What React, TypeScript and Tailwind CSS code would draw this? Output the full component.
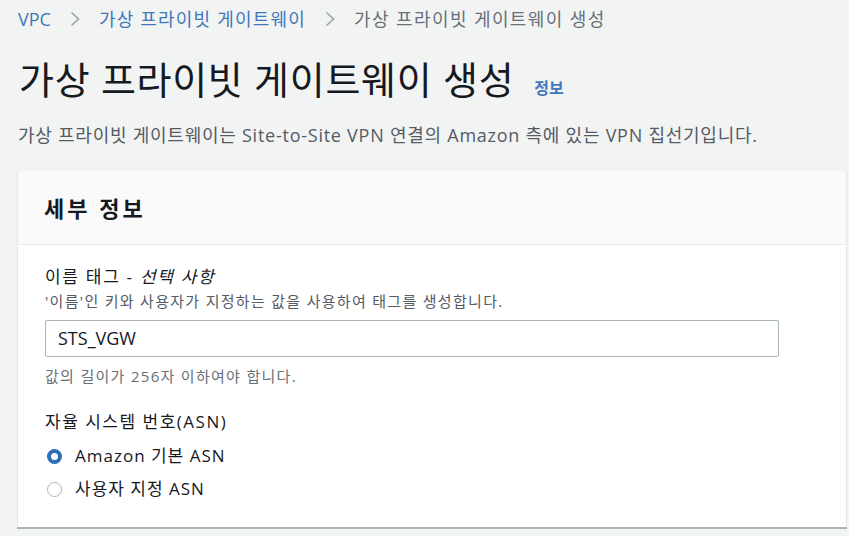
const FONT = "font-['Open_Sans','Noto_Sans_CJK_KR',sans-serif]"

function Chevron() {
  return (
    <svg width="12" height="16" viewBox="0 0 12 16" className="mx-[18px] shrink-0" aria-hidden>
      <path d="M2.5 1.5 L9.5 8 L2.5 14.5" fill="none" stroke="#9aa3a5" strokeWidth="1.6" />
    </svg>
  )
}

function Radio({ checked, label }: { checked: boolean; label: string }) {
  return (
    <label className="flex h-[24px] items-center">
      <span
        className={`ml-[2px] box-border h-[15px] w-[15px] shrink-0 rounded-full ${
          checked ? 'border-[4px] border-[#2f6db5] bg-white' : 'border border-[#aab7b8] bg-white'
        }`}
      />
      <span className="ml-[13px] text-[17px] leading-[24px] tracking-[1px] text-[#16191f]">{label}</span>
    </label>
  )
}

export default function App() {
  return (
    <div className={`${FONT} h-[536px] w-full overflow-hidden bg-[#f2f3f3] px-[17px]`}>
      {/* breadcrumb */}
      <nav className="ml-[1px] mt-[7px] flex h-[24px] items-center text-[18px] leading-[24px]">
        <span className="text-[#3f78b9]">VPC</span>
        <Chevron />
        <span className="tracking-[1.2px] text-[#3f78b9]">가상 프라이빗 게이트웨이</span>
        <Chevron />
        <span className="tracking-[1.4px] text-[#687078]">가상 프라이빗 게이트웨이 생성</span>
      </nav>

      {/* page title */}
      <div className="ml-[2px] mt-[26px] flex h-[44px] items-baseline">
        <h1 className="text-[38px] font-normal leading-[44px] tracking-[0.7px] text-[#16191f]">
          가상 프라이빗 게이트웨이 생성
        </h1>
        <span className="ml-[20px] text-[16px] font-bold text-[#3f78b9]">정보</span>
      </div>

      <p className="ml-[1px] mt-[22px] text-[18px] leading-[24px] tracking-[0.75px] text-[#545b64]">
        가상 프라이빗 게이트웨이는 Site-to-Site VPN 연결의 Amazon 측에 있는 VPN 집선기입니다.
      </p>

      {/* details card */}
      <section className="-mr-[15px] mt-[24px] border-l border-r border-[#e4e7e8] bg-white shadow-[0_2px_0_#aab7b8]">
        <div className="flex h-[74px] items-center border-b border-[#eaeded] bg-[#fafafa] px-[26px]">
          <h2 className="text-[22px] font-bold leading-[28px] tracking-[3px] text-[#16191f]">세부 정보</h2>
        </div>

        <div className="px-[27px] pb-[26px] pt-[20px]">
          <div className="text-[17px] leading-[24px] tracking-[1.7px] text-[#16191f]">
            이름 태그 - <span className="italic">선택 사항</span>
          </div>
          <div className="mt-[2px] text-[15px] leading-[20px] tracking-[1.3px] text-[#545b64]">
            '이름'인 키와 사용자가 지정하는 값을 사용하여 태그를 생성합니다.
          </div>
          <div className="mt-[9px] flex h-[37px] w-[734px] items-center rounded-[2px] border border-[#aab7b8] bg-white px-[12px] text-[18px] text-[#16191f]">
            STS_VGW
          </div>
          <div className="mt-[9px] text-[15px] leading-[20px] tracking-[1.3px] text-[#687078]">
            값의 길이가 256자 이하여야 합니다.
          </div>

          <div className="mt-[24px] text-[17px] leading-[24px] tracking-[1.5px] text-[#16191f]">
            자율 시스템 번호(ASN)
          </div>
          <div className="mt-[10px] flex flex-col gap-[9px]">
            <Radio checked label="Amazon 기본 ASN" />
            <Radio checked={false} label="사용자 지정 ASN" />
          </div>
        </div>
      </section>
    </div>
  )
}
